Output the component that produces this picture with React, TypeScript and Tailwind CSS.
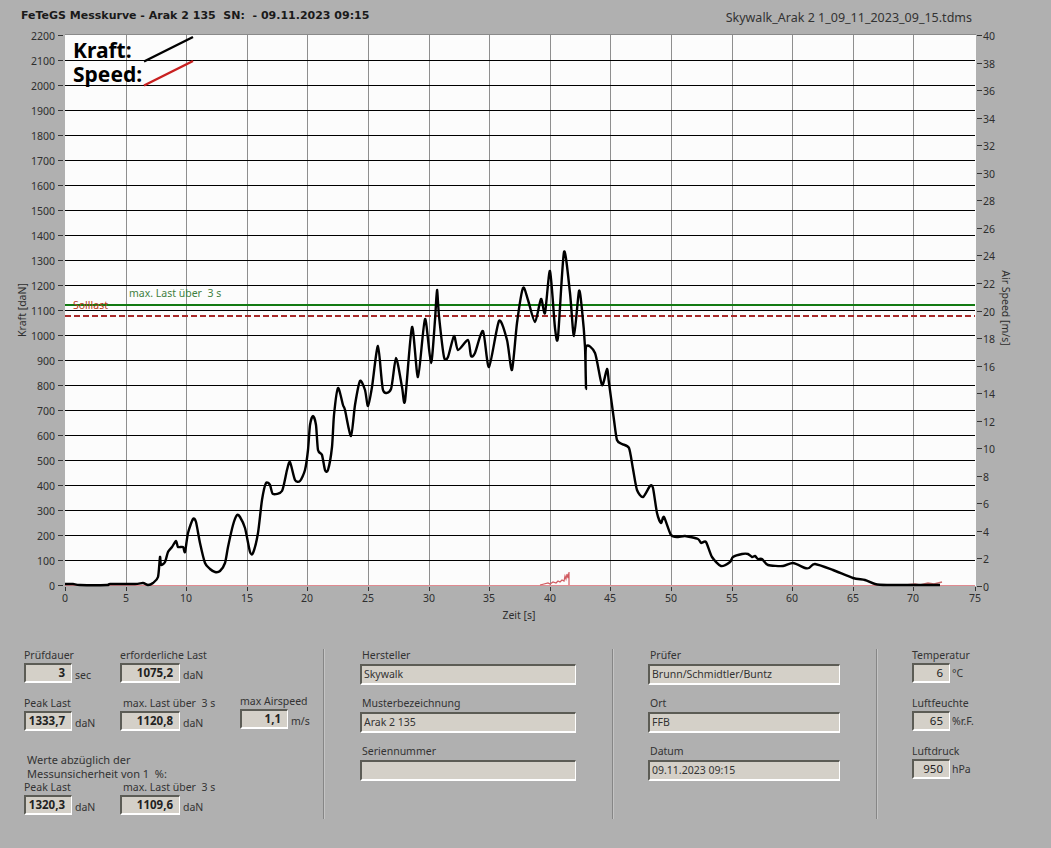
import React from "react";

const kraft = "65,584 73,584 80,585 107,585 110,584 135,584 143,583 148,585 153,583 158,577 160,557 161,565 165,562 168,552 172,547 176,541 178,547 183,547 185,552 188,533 193,519 196,522 200,543 205,563 210,569 215,572 220,571 225,563 228,547 233,525 237,515 240,517 245,528 250,552 253,553 258,533 262,500 266,483 270,485 273,494 282,491 287,470 290,462 295,480 300,481 305,470 308,450 310,425 313,416 316,425 318,450 322,455 325,470 328,470 332,447 334,415 338,388 343,405 345,410 351,436 355,405 360,381 365,390 368,406 372,387 378,346 383,390 391,389 396,358 402,387 405,401 412,327 418,377 425,319 431,363 435,320 437,290 439,316 444,357 448,357 454,336 458,350 468,340 471,356 475,353 483,331 489,367 499,321 507,340 512,370 517,323 523,288 528,300 535,322 541,299 545,313 550,271 555,328 558,337 564,252 570,293 574,336 579,291 582,310 585,347 586,389 586,347 595,353 602,385 607,369 609,383 614,420 617,440 622,444 629,448 633,469 637,490 643,497 650,486 653,488 657,513 661,523 664,517 671,535 678,537 685,536 698,539 701,543 706,542 712,557 721,566 730,562 733,557 742,554 748,554 752,557 755,556 758,559 762,559 768,565 783,566 793,563 805,568 809,568 815,564 833,570 853,578 865,580 875,584 887,585 940,585";
const redBump = "540,585 544,584 548,583 550,584 553,582 556,583 558,581 560,582 562,580 564,581 565,576 566,579 567,574 568,578 569,572 569,585";
const redEnd = "905,585 915,584 920,585 928,583 934,584 942,582";

// Smooth the sampled curve (Catmull-Rom to cubic Bezier), as the plotted signal is a continuous trace.
function smooth(raw: string, k = 0.12) {
  const p = raw.split(" ").map((s) => s.split(",").map(Number));
  let d = `M${p[0][0]} ${p[0][1]}`;
  for (let i = 0; i < p.length - 1; i++) {
    const a = p[Math.max(i - 1, 0)];
    const b = p[i];
    const c = p[i + 1];
    const e = p[Math.min(i + 2, p.length - 1)];
    d += ` C${b[0] + (c[0] - a[0]) * k} ${b[1] + (c[1] - a[1]) * k} ${c[0] - (e[0] - b[0]) * k} ${c[1] - (e[1] - b[1]) * k} ${c[0]} ${c[1]}`;
  }
  return d;
}

const vLines = [126.5, 186.5, 247.5, 307.5, 368.5, 429.5, 489.5, 550.5, 610.5, 671.5, 732.5, 792.5, 853.5, 913.5];
const xLabels = [65, 126, 186, 247, 307, 368, 429, 489, 550, 610, 671, 732, 792, 853, 913, 975];
const yVals = Array.from({ length: 23 }, (_, i) => i * 100);
const yPos = (v: number) => 585.5 - v / 4;
const rVals = Array.from({ length: 21 }, (_, i) => i * 2);
const rPos = (v: number) => Math.round(586 - v * 13.775) + 0.5;

function Chart() {
  return (
    <svg viewBox="0 28 1051 612" className="block h-[612px] w-[1051px]">
      <rect x="65" y="35" width="911" height="551" className="fill-[#fcfcfc]" />
      <line x1="65" x2="976" y1="34.5" y2="34.5" stroke="#8a8a8a" />
      {vLines.map((x) => (
        <line key={x} x1={x} x2={x} y1="35" y2="586" stroke="#8e8e8e" />
      ))}
      {yVals.slice(1, 22).map((v) => (
        <line key={v} x1="65" x2="975" y1={yPos(v)} y2={yPos(v)} stroke="#000" />
      ))}
      {yVals.map((v) => (
        <g key={v}>
          <line x1="58" x2="63" y1={yPos(v)} y2={yPos(v)} stroke="#333" />
          <text x="55" y={yPos(v) + 4} textAnchor="end" className="fill-[#2e2e2e] text-[10.5px] font-['Noto_Sans',sans-serif]">{v}</text>
        </g>
      ))}
      {rVals.map((v) => (
        <g key={v}>
          <line x1="977" x2="982" y1={rPos(v)} y2={rPos(v)} stroke="#333" />
          <text x="983" y={rPos(v) + 4} className="fill-[#2e2e2e] text-[10.5px] font-['Noto_Sans',sans-serif]">{v}</text>
        </g>
      ))}
      {xLabels.map((x, i) => (
        <g key={x}>
          <line x1={x + 0.5} x2={x + 0.5} y1="587" y2="591" stroke="#333" />
          <text x={x} y="602" textAnchor="middle" className="fill-[#2e2e2e] text-[10.5px] font-['Noto_Sans',sans-serif]">{i * 5}</text>
        </g>
      ))}
      <text x="519" y="619" textAnchor="middle" className="fill-[#2e2e2e] text-[10.5px] font-['Noto_Sans',sans-serif]">Zeit [s]</text>
      <text transform="translate(26 310) rotate(-90)" textAnchor="middle" className="fill-[#2e2e2e] text-[10.5px] font-['Noto_Sans',sans-serif]">Kraft [daN]</text>
      <text transform="translate(1002 308) rotate(90)" textAnchor="middle" className="fill-[#2e2e2e] text-[10.5px] font-['Noto_Sans',sans-serif]">Air Speed [m/s]</text>

      <text x="73" y="58" className="fill-black text-[21px] font-bold font-['Noto_Sans',sans-serif]">Kraft:</text>
      <text x="73" y="82" className="fill-black text-[21px] font-bold font-['Noto_Sans',sans-serif]">Speed:</text>
      <line x1="144" y1="61.5" x2="193" y2="37" stroke="#000" strokeWidth="2.4" />
      <line x1="144" y1="85.5" x2="193" y2="61" stroke="#c82020" strokeWidth="2.4" />

      <text x="129" y="297" xmlSpace="preserve" className="fill-[#3f7f3f] text-[10.5px] font-['Noto_Sans',sans-serif]">max. Last über  3 s</text>
      <line x1="65" x2="975" y1="305" y2="305" stroke="#127a12" strokeWidth="2" />
      <line x1="65" x2="975" y1="316" y2="316" stroke="#a82a2a" strokeWidth="2" strokeDasharray="6 3" />
      <text x="73" y="309" className="fill-[#b83a20] text-[10.5px] font-['Noto_Sans',sans-serif]">Solllast</text>

      <line x1="65" x2="975" y1="585.5" y2="585.5" stroke="#e08a90" />
      <polyline points={redBump} fill="none" stroke="#d05a60" strokeWidth="1.2" />
      <polyline points={redEnd} fill="none" stroke="#c86a6a" strokeWidth="1.5" />
      <path d={smooth(kraft)} fill="none" stroke="#000" strokeWidth="2.4" strokeLinejoin="round" />
    </svg>
  );
}

const font = "font-['Noto_Sans',sans-serif] text-[10.5px] leading-[14px] text-[#333]";
const box =
  "border-t-2 border-l-2 border-b-2 border-r border-t-[#5c5c55] border-l-[#5c5c55] border-b-white border-r-white bg-[#d4d0c8]";

function Num({ w, value, bold = true }: { w: string; value: string; bold?: boolean }) {
  return (
    <div className={`${box} ${w} flex h-5 items-center justify-end pr-1.5 text-[11.5px] text-[#222] font-['Noto_Sans',sans-serif] ${bold ? "font-bold" : ""}`}>
      {value}
    </div>
  );
}

function TextField({ label, value, w }: { label: string; value: string; w: string }) {
  return (
    <div className="flex h-[48px] flex-col">
      <div className={`${font} -mt-px h-[14px] pl-0.5`}>{label}</div>
      <div className={`${box} ${w} mt-0.5 flex h-[21px] items-center pl-0.5 text-[10.5px] text-[#333] font-['Noto_Sans',sans-serif]`}>{value}</div>
    </div>
  );
}

function Divider() {
  return <div className="h-[170px] w-0.5 shrink-0 border-l border-l-[#868686] bg-[#c4c4c4]" />;
}

function Metric({ label, value, unit, w, labelClass = "" }: { label: string; value: string; unit: string; w: string; labelClass?: string }) {
  return (
    <div className="flex flex-col">
      <div className={`${font} h-[15px] whitespace-pre ${labelClass}`}>{label}</div>
      <div className="flex items-center">
        <Num w={w} value={value} />
        <span className={`${font} ml-[3px] mt-1`}>{unit}</span>
      </div>
    </div>
  );
}

function Env({ label, value, unit }: { label: string; value: string; unit: string }) {
  return (
    <div className="flex h-[48px] flex-col">
      <div className={`${font} h-[15px]`}>{label}</div>
      <div className="flex items-center">
        <Num w="w-[38px]" value={value} bold={false} />
        <span className={`${font} ml-[2px]`}>{unit}</span>
      </div>
    </div>
  );
}

export default function App() {
  return (
    <div className="h-[848px] w-[1051px] overflow-hidden bg-[#b0b0b0]">
      <div className="flex h-7 items-start justify-between pl-[21px] pr-[79px] pt-2">
        <div className="whitespace-pre text-[11px] font-bold leading-[15px] text-[#1a1a1a] font-['DejaVu_Sans',sans-serif]">FeTeGS Messkurve - Arak 2 135  SN:  - 09.11.2023 09:15</div>
        <div className="mt-0.5 text-[12.5px] leading-[15px] text-[#333] font-['Noto_Sans',sans-serif]">Skywalk_Arak 2 1_09_11_2023_09_15.tdms</div>
      </div>
      <Chart />
      <div className="flex pt-[9px]">
        <div className="-mt-px flex w-[323px] shrink-0 flex-col pl-6">
          <div className="flex h-[48px]">
            <div className="w-24 shrink-0"><Metric label="Prüfdauer" value="3" unit="sec" w="w-12" /></div>
            <Metric label="erforderliche Last" value="1075,2" unit="daN" w="w-[60px]" />
          </div>
          <div className="flex h-[48px]">
            <div className="w-24 shrink-0"><Metric label="Peak Last" value="1333,7" unit="daN" w="w-12" /></div>
            <div className="w-[120px] shrink-0"><Metric label="max. Last über  3 s" labelClass="pl-[3px]" value="1120,8" unit="daN" w="w-[60px]" /></div>
            <div className="-mt-0.5"><Metric label="max Airspeed" value="1,1" unit="m/s" w="w-12" /></div>
          </div>
          <div className="whitespace-pre pl-[3px] pt-[9px] font-['Noto_Sans',sans-serif] text-[11px] leading-[14px] text-[#333]">
            <div>Werte abzüglich der</div>
            <div>Messunsicherheit von 1  %:</div>
          </div>
          <div className="-mt-px flex">
            <div className="w-24 shrink-0"><Metric label="Peak Last" value="1320,3" unit="daN" w="w-12" /></div>
            <Metric label="max. Last über  3 s" labelClass="pl-[3px]" value="1109,6" unit="daN" w="w-[60px]" />
          </div>
        </div>
        <Divider />
        <div className="w-[287px] shrink-0 pl-[35px]">
          <TextField label="Hersteller" value="Skywalk" w="w-[216px]" />
          <TextField label="Musterbezeichnung" value="Arak 2 135" w="w-[216px]" />
          <TextField label="Seriennummer" value="" w="w-[216px]" />
        </div>
        <Divider />
        <div className="w-[262px] shrink-0 pl-[34px]">
          <TextField label="Prüfer" value="Brunn/Schmidtler/Buntz" w="w-[192px]" />
          <TextField label="Ort" value="FFB" w="w-[192px]" />
          <TextField label="Datum" value="09.11.2023 09:15" w="w-[192px]" />
        </div>
        <Divider />
        <div className="-mt-px pl-[34px]">
          <Env label="Temperatur" value="6" unit="°C" />
          <Env label="Luftfeuchte" value="65" unit="%r.F." />
          <Env label="Luftdruck" value="950" unit="hPa" />
        </div>
      </div>
    </div>
  );
}
